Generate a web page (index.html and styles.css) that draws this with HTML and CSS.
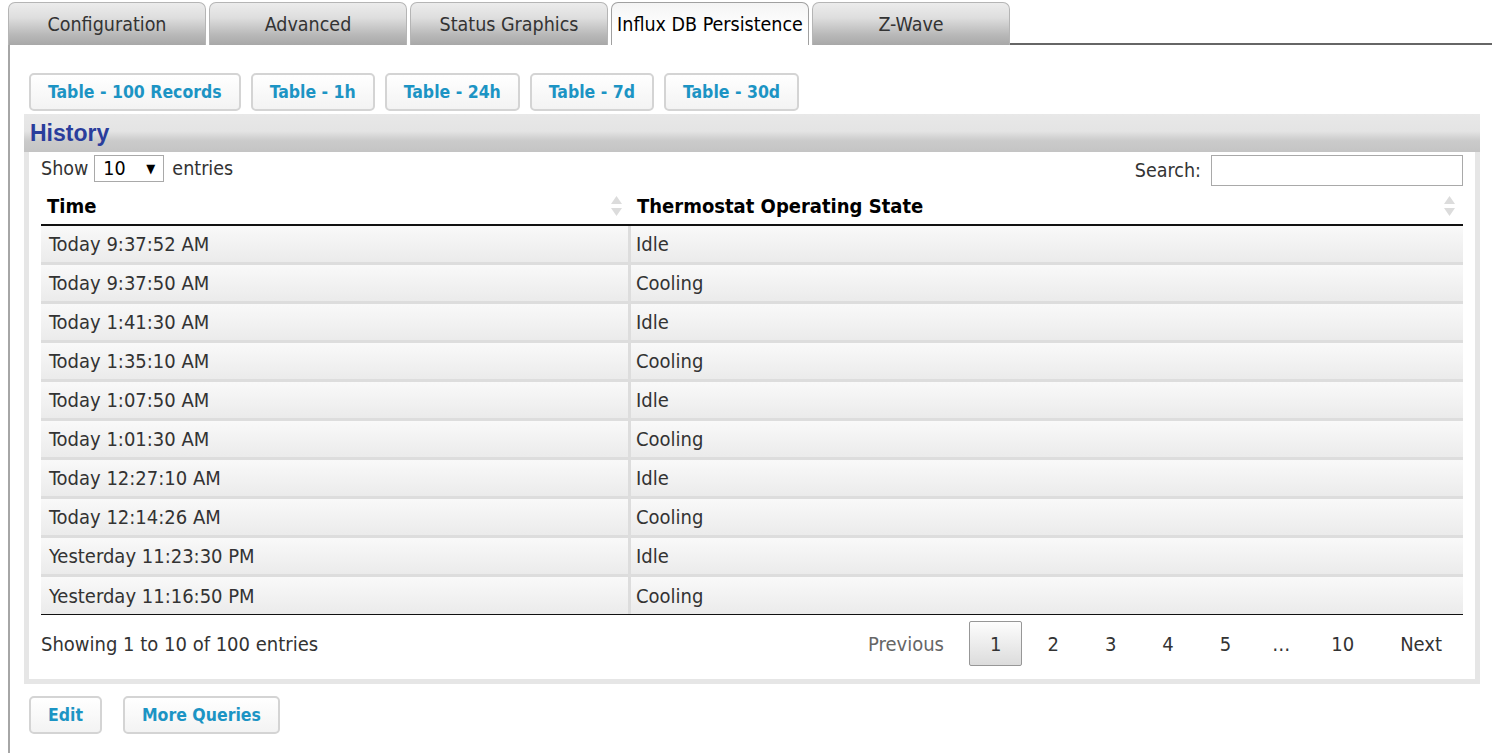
FILE: index.html
```html
<!DOCTYPE html>
<html>
<head>
<meta charset="utf-8">
<link rel="stylesheet" href="styles.css">
</head>
<body>
<div class="tabs">
  <div class="tab">Configuration</div>
  <div class="tab">Advanced</div>
  <div class="tab">Status Graphics</div>
  <div class="tab active">Influx DB Persistence</div>
  <div class="tab last">Z-Wave</div>
  <div class="tab-fill"></div>
</div>
<div class="panel">
  <div class="btnrow">
    <div class="btn">Table - 100 Records</div>
    <div class="btn">Table - 1h</div>
    <div class="btn">Table - 24h</div>
    <div class="btn">Table - 7d</div>
    <div class="btn">Table - 30d</div>
  </div>
  <div class="history">
    <div class="hist-head">History</div>
    <div class="hist-body">
      <div class="dt-top">
        <div class="length">Show <span class="select"><span>10</span><span class="arrow">▼</span></span> entries</div>
        <div class="search">Search: <span class="input"></span></div>
      </div>
      <table class="dt">
        <thead>
          <tr>
            <th class="c1"><div class="th-in"><span>Time</span><svg class="sort" width="13" height="22" viewBox="0 0 13 22"><path d="M6.5 1 L12 9 L1 9 Z" fill="#dcdcdc"/><path d="M6.5 21 L12 13 L1 13 Z" fill="#dcdcdc"/></svg></div></th>
            <th class="c2"><div class="th-in"><span>Thermostat Operating State</span><svg class="sort" width="13" height="22" viewBox="0 0 13 22"><path d="M6.5 1 L12 9 L1 9 Z" fill="#dcdcdc"/><path d="M6.5 21 L12 13 L1 13 Z" fill="#dcdcdc"/></svg></div></th>
          </tr>
        </thead>
        <tbody>
          <tr><td class="c1">Today 9:37:52 AM</td><td class="c2">Idle</td></tr>
          <tr><td class="c1">Today 9:37:50 AM</td><td class="c2">Cooling</td></tr>
          <tr><td class="c1">Today 1:41:30 AM</td><td class="c2">Idle</td></tr>
          <tr><td class="c1">Today 1:35:10 AM</td><td class="c2">Cooling</td></tr>
          <tr><td class="c1">Today 1:07:50 AM</td><td class="c2">Idle</td></tr>
          <tr><td class="c1">Today 1:01:30 AM</td><td class="c2">Cooling</td></tr>
          <tr><td class="c1">Today 12:27:10 AM</td><td class="c2">Idle</td></tr>
          <tr><td class="c1">Today 12:14:26 AM</td><td class="c2">Cooling</td></tr>
          <tr><td class="c1">Yesterday 11:23:30 PM</td><td class="c2">Idle</td></tr>
          <tr class="last"><td class="c1">Yesterday 11:16:50 PM</td><td class="c2">Cooling</td></tr>
        </tbody>
      </table>
      <div class="dt-bottom">
        <div class="info">Showing 1 to 10 of 100 entries</div>
        <div class="pager">
          <span class="pg disabled">Previous</span>
          <span class="pg current">1</span>
          <span class="pg">2</span>
          <span class="pg">3</span>
          <span class="pg">4</span>
          <span class="pg">5</span>
          <span class="ellipsis">…</span>
          <span class="pg">10</span>
          <span class="pg">Next</span>
        </div>
      </div>
    </div>
  </div>
  <div class="btnrow bottom">
    <div class="btn">Edit</div>
    <div class="btn">More Queries</div>
  </div>
</div>
</body>
</html>
```
FILE: styles.css
```css
* { box-sizing: border-box; }
body {
  margin: 0;
  font-family: "DejaVu Sans Condensed", "DejaVu Sans", sans-serif;
  font-stretch: condensed;
  font-size: 20px;
  color: #333;
  background: #fff;
}
.tabs {
  display: flex;
  align-items: flex-end;
  height: 45px;
  padding: 2px 0 0 8px;
  font-size: 19.5px;
}
.tab {
  width: 198px;
  height: 43px;
  margin-right: 3px;
  border: 1px solid #b5b5b5;
  border-bottom: none;
  border-radius: 7px 7px 0 0;
  background: linear-gradient(#ececec, #dedede 35%, #b9b9b9 75%, #a8a8a8);
  display: flex;
  align-items: center;
  justify-content: center;
  color: #333;
  white-space: nowrap;
}
.tab.active {
  background: linear-gradient(#f4f4f4, #fff 60%, #fff);
  border-color: #a0a0a0;
  color: #000;
}
.tab.last { margin-right: 0; }
.tab-fill {
  flex: 1;
  height: 2px;
  background: #666;
}
.panel {
  margin-left: 8px;
  border-left: 2px solid #a6a6a6;
  padding: 28px 12px 20px 14px;
  min-height: 708px;
}
.btnrow {
  display: flex;
  gap: 10px;
  padding-left: 5px;
}
.btnrow.bottom {
  gap: 21px;
  margin-top: 12px;
}
.btn {
  height: 38px;
  padding: 0 17px;
  border: 2px solid #d4d4d4;
  border-radius: 5px;
  background: linear-gradient(#ffffff, #f3f3f3);
  color: #1c94c4;
  font-weight: bold;
  font-size: 17.5px;
  display: flex;
  align-items: center;
  white-space: nowrap;
}
.history { margin-top: 3px; }
.hist-head {
  height: 38px;
  padding-left: 6px;
  background: linear-gradient(#e8e8e8 0%, #e4e4e4 45%, #cbcbcb 70%, #c4c4c4 100%);
  font-family: "Liberation Sans", Arial, sans-serif;
  font-stretch: normal;
  font-weight: bold;
  font-size: 23px;
  color: #2a3d9c;
  display: flex;
  align-items: center;
}
.hist-body {
  border: 5px solid #e6e6e6;
  border-top: 0;
  background: #fff;
  padding: 3px 12px 13px 12px;
}
.dt-top {
  display: flex;
  justify-content: space-between;
  align-items: flex-start;
  height: 32px;
  font-size: 19.5px;
}
.length {
  display: flex;
  align-items: center;
  gap: 6px;
  height: 27px;
}
.select {
  width: 70px;
  height: 27px;
  border: 1px solid #a9a9a9;
  display: flex;
  align-items: center;
  justify-content: space-between;
  padding: 0 8px 0 8px;
  color: #000;
  margin-right: 2px;
}
.arrow { font-size: 13px; }
.search {
  display: flex;
  align-items: center;
  gap: 10px;
  height: 31px;
}
.input {
  width: 252px;
  height: 31px;
  border: 1px solid #a9a9a9;
}
.dt {
  width: 100%;
  border-collapse: separate;
  border-spacing: 0;
  border-bottom: 1px solid #111;
}
.dt th {
  height: 39px;
  padding: 0 7px 0 6px;
  border-bottom: 2px solid #111;
  text-align: left;
  color: #000;
  font-weight: bold;
}
.dt th.c1 { width: 590px; padding-right: 8px; }
.th-in {
  display: flex;
  align-items: center;
  justify-content: space-between;
}
.dt td {
  height: 39px;
  padding: 0 8px;
  background: linear-gradient(#f9f9f9, #ebebeb);
  border-bottom: 3px solid #dddddd;
  white-space: nowrap;
}
.dt tr.last td {
  height: 37px;
  border-bottom: 0;
}
.dt td.c1 { border-right: 3px solid #dddddd; }
.dt td.c2 { padding-left: 5px; }
.dt-bottom {
  display: flex;
  justify-content: space-between;
  align-items: center;
  margin-top: 6px;
}
.pager {
  display: flex;
  align-items: center;
  gap: 4px;
}
.pg {
  height: 45px;
  padding: 0 20px;
  border: 1px solid transparent;
  border-radius: 2px;
  display: flex;
  align-items: center;
  color: #333;
}
.pg.disabled { color: #666; }
.pg.current {
  border-color: #979797;
  background: linear-gradient(#fdfdfd, #dcdcdc);
}
.ellipsis {
  padding: 0 16px;
  color: #333;
}
```
